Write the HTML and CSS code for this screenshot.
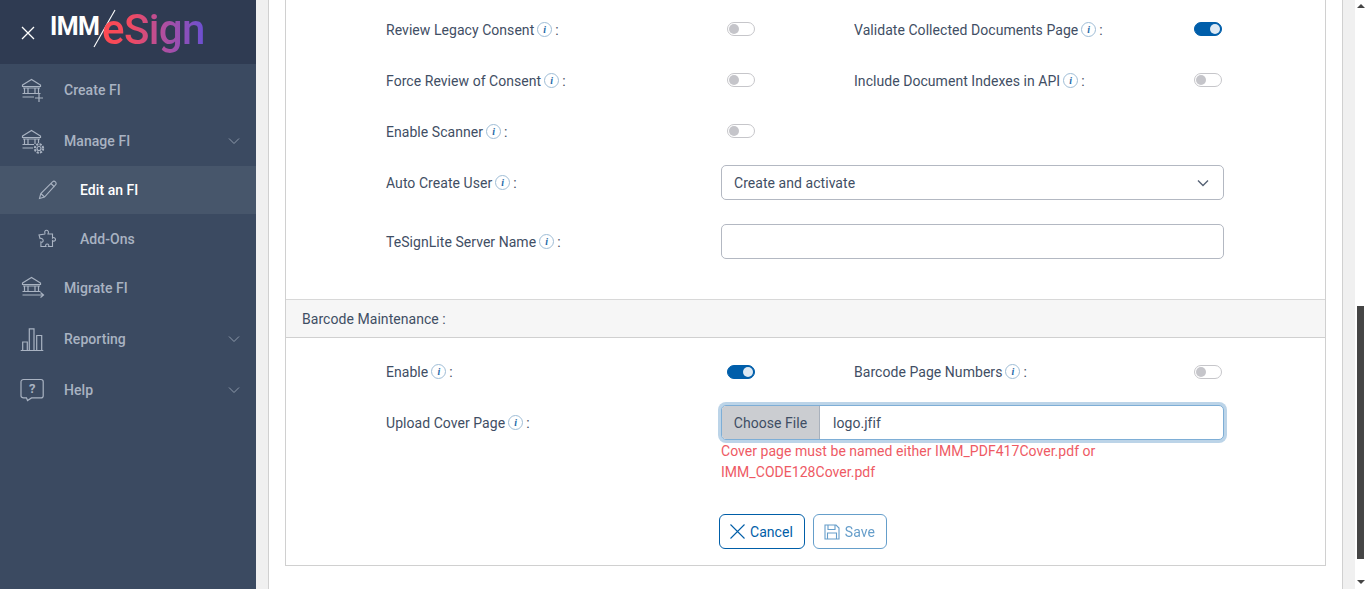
FILE: index.html
```html
<!DOCTYPE html>
<html lang="en">
<head>
<meta charset="utf-8">
<title>IMM eSign - Edit an FI</title>
<link rel="stylesheet" href="styles.css">
</head>
<body>
<div class="app">
  <aside class="sidebar">
    <div class="brand">
      <svg class="close-icon" width="16" height="16" viewBox="0 0 16 16"><path d="M2 2l12 12M14 2L2 14" stroke="#fff" stroke-width="1.3" fill="none"/></svg>
      <div class="logo">
        <span class="logo-imm">IMM</span>
        <svg class="logo-slash" width="24" height="40" viewBox="0 0 24 40"><path d="M22 1L1 38" stroke="#fff" stroke-width="1.1" fill="none"/></svg>
        <span class="logo-esign">eSign</span>
      </div>
    </div>
    <nav class="nav">
      <a class="nav-item">
        <svg class="nav-icon" width="26" height="28" viewBox="0 0 26 28"><g fill="none" stroke="#a9b3c2" stroke-width="1.2"><path d="M3.500 9L12.500 3.500 21.500 9v1.500H3.500zM5.500 12v5M9 12v5M16 12v5M19.500 12v5M4 12h17M3.500 17.500h18M3.500 21h11.500M20 18v8M16 22h8"/></g></svg>
        <span>Create FI</span>
      </a>
      <a class="nav-item">
        <svg class="nav-icon" width="26" height="28" viewBox="0 0 26 28"><g fill="none" stroke="#a9b3c2" stroke-width="1.2"><path d="M3.500 9L12.500 3.500 21.500 9v1.500H3.500zM5.500 12v5M9 12v5M16 12v5M19.500 12v4M4 12h17M3.500 17.500h11.500M3.500 21h10.500"/><circle cx="20" cy="21.500" r="2"/><circle cx="20" cy="21.500" r="4.200" stroke-dasharray="2.200 1.100" stroke-width="2"/></g></svg>
        <span>Manage FI</span>
        <svg class="chev" width="12" height="8" viewBox="0 0 12 8"><path d="M1 1.500l5 5 5-5" stroke="#8e9aab" fill="none"/></svg>
      </a>
      <a class="nav-item sub active">
        <svg class="nav-icon sub-icon" width="20" height="20" viewBox="0 0 20 20"><path d="M1.500 18.500l1.300-5L14.500 1.800c.9-.8 2.100-.7 2.900.1.800.8.900 2 .1 2.900L6.500 17zM2.800 13.500l3.700 3.500M13 3.500l3.500 3.500" fill="none" stroke="#a9b3c2" stroke-width="1.100"/></svg>
        <span>Edit an FI</span>
      </a>
      <a class="nav-item sub">
        <svg class="nav-icon sub-icon" width="20" height="20" viewBox="0 0 20 20"><path d="M7 4c-.8-1 0-2.800 1.500-2.800S11 3 10.200 4L10 5h4.500v4c1-.8 2.800-.5 3 1.200.2 1.800-2 2.300-3 1.500v5.800h-4c.7-1 .2-2.500-1.300-2.500s-2 1.500-1.300 2.500h-5v-4.500c1 .6 2.300 0 2.300-1.500S3.200 8.800 2 9.500L1 6l5.800-1z" fill="none" stroke="#a9b3c2" stroke-width="1.100"/></svg>
        <span>Add-Ons</span>
      </a>
      <a class="nav-item">
        <svg class="nav-icon" width="26" height="28" viewBox="0 0 26 28"><g fill="none" stroke="#a9b3c2" stroke-width="1.200"><path d="M3.500 9L12.500 3.500 21.500 9v1.500H3.500zM5.500 12v5M9 12v5M16 12v5M19.500 12v5M4 12h17M3.500 17.500h18M3.500 21h21M21.500 18.500l3 2.500-3 2.500"/></g></svg>
        <span>Migrate FI</span>
      </a>
      <a class="nav-item">
        <svg class="nav-icon" width="26" height="28" viewBox="0 0 26 28"><g fill="none" stroke="#a9b3c2" stroke-width="1.200"><path d="M1.700 25.500h22.600M3.700 25.500V17h4.600v8.500M10.300 25.500V3.800H15v21.700M17.700 25.500v-15h5v15"/></g></svg>
        <span>Reporting</span>
        <svg class="chev" width="12" height="8" viewBox="0 0 12 8"><path d="M1 1.500l5 5 5-5" stroke="#8e9aab" fill="none"/></svg>
      </a>
      <a class="nav-item">
        <svg class="nav-icon" width="26" height="28" viewBox="0 0 26 28"><path d="M4.500 3.500h17.500c1.300 0 2.200.9 2.200 2.200v14c0 1.300-.9 2.200-2.200 2.200h-9.500L8.500 24.500 7.500 21.900h-3c-1.300 0-2.500-.9-2.500-2.200v-14c0-1.300 1.200-2.200 2.500-2.200z" fill="none" stroke="#a9b3c2" stroke-width="1.200"/><text x="13.300" y="17" text-anchor="middle" class="help-mark">?</text></svg>
        <span>Help</span>
        <svg class="chev" width="12" height="8" viewBox="0 0 12 8"><path d="M1 1.500l5 5 5-5" stroke="#8e9aab" fill="none"/></svg>
      </a>
    </nav>
  </aside>

  <div class="gutter"></div>

  <main class="panel">
    <section class="card">
      <div class="rows upper">
        <div class="row">
          <div class="label">Review Legacy Consent<i class="info">i</i><span class="colon">:</span></div>
          <div class="cell"><span class="toggle"></span></div>
          <div class="label">Validate Collected Documents Page<i class="info">i</i><span class="colon">:</span></div>
          <div class="cell"><span class="toggle on"></span></div>
        </div>
        <div class="row">
          <div class="label">Force Review of Consent<i class="info">i</i><span class="colon">:</span></div>
          <div class="cell"><span class="toggle"></span></div>
          <div class="label">Include Document Indexes in API<i class="info">i</i><span class="colon">:</span></div>
          <div class="cell"><span class="toggle"></span></div>
        </div>
        <div class="row">
          <div class="label">Enable Scanner<i class="info">i</i><span class="colon">:</span></div>
          <div class="cell"><span class="toggle"></span></div>
        </div>
        <div class="row field-row">
          <div class="label">Auto Create User<i class="info">i</i><span class="colon">:</span></div>
          <div class="field select">
            <span>Create and activate</span>
            <svg width="12" height="8" viewBox="0 0 12 8"><path d="M1 1.500l5 5 5-5" stroke="#566275" stroke-width="1.400" fill="none"/></svg>
          </div>
        </div>
        <div class="row field-row name-row">
          <div class="label">TeSignLite Server Name<i class="info">i</i><span class="colon">:</span></div>
          <div class="field"></div>
        </div>
      </div>

      <header class="band">Barcode Maintenance :</header>

      <div class="rows lower">
        <div class="row">
          <div class="label">Enable<i class="info">i</i><span class="colon">:</span></div>
          <div class="cell"><span class="toggle on"></span></div>
          <div class="label">Barcode Page Numbers<i class="info">i</i><span class="colon">:</span></div>
          <div class="cell"><span class="toggle"></span></div>
        </div>
        <div class="row upload-row">
          <div class="label">Upload Cover Page<i class="info">i</i><span class="colon">:</span></div>
          <div class="upload-col">
            <div class="file">
              <span class="file-btn">Choose File</span>
              <span class="file-name">logo.jfif</span>
            </div>
            <p class="error">Cover page must be named either IMM_PDF417Cover.pdf or IMM_CODE128Cover.pdf</p>
          </div>
        </div>
        <div class="actions">
          <button class="btn" type="button">
            <svg width="17" height="17" viewBox="0 0 17 17"><path d="M1.500 1.500l14 14M15.500 1.500l-14 14" stroke="#005ea8" stroke-width="1.100" fill="none"/></svg>
            Cancel
          </button>
          <button class="btn disabled" type="button">
            <svg width="16" height="16" viewBox="0 0 16 16"><g fill="none" stroke="#005ea8" stroke-width="1.100"><path d="M1 1h11l3 3v11H1zM4 1v4.500h7V1M3.500 15V9h9v6"/></g></svg>
            Save
          </button>
        </div>
      </div>
    </section>
  </main>

  <div class="track">
    <div class="scrollbar">
      <span class="arrow up"></span>
      <span class="thumb"></span>
      <span class="arrow down"></span>
    </div>
  </div>
</div>
</body>
</html>
```

FILE: styles.css
```css
* { box-sizing: border-box; }
html, body { margin: 0; height: 100%; overflow: hidden; }
body { font-family: Roboto, "Liberation Sans", sans-serif; font-size: 14px; color: #3f4e64; background: #fff; }

.app { display: flex; height: 589px; }

.sidebar { width: 256px; flex: none; background: #3b4a61; }
.brand { height: 64px; background: #2f3b52; display: flex; align-items: center; padding-left: 20px; }
.close-icon { flex: none; margin-top: 1px; }
.logo { position: relative; width: 170px; height: 64px; margin-left: 15px; }
.logo-imm { position: absolute; left: -1px; top: 12px; font-size: 25px; line-height: 30px; font-weight: 700; color: #fff; letter-spacing: -0.6px; }
.logo-slash { position: absolute; left: 42px; top: 9px; }
.logo-esign {
  position: absolute; left: 51px; top: 5px; font-size: 42px; line-height: 50px; font-weight: 500; letter-spacing: -0.6px;
  background: linear-gradient(90deg, #ff4a50 0%, #f04a62 28%, #b04fa0 60%, #6a50d2 100%);
  -webkit-background-clip: text; background-clip: text; color: transparent;
}

.nav { display: flex; flex-direction: column; }
.nav-item { height: 51px; display: flex; align-items: center; padding-left: 19px; color: #a9b3c2; font-weight: 500; letter-spacing: 0.05px; }
.nav-item span { flex: 1; }
.nav-icon { flex: none; margin-right: 19px; }
.chev { flex: none; margin-right: 16px; }
.nav-item.sub { height: 48px; padding-left: 38px; }
.nav-item.sub + .sub { padding-top: 2px; }
.sub-icon { margin-right: 22px; }
.nav-item.active { background: #47566b; color: #fff; }
.help-mark { font: 700 13px Roboto, sans-serif; fill: #a9b3c2; }

.gutter { width: 12px; flex: none; background: #f0f0f0; }

.panel { width: 1075px; flex: none; background: #fff; border-left: 1px solid #d0d0d0; border-right: 1px solid #d0d0d0; padding: 0 16px; overflow: hidden; }
.card { border: 1px solid #d0d0d0; border-top: 0; height: 566px; }

.rows { padding: 4px 0 0 100px; }
.row { display: flex; align-items: center; height: 51px; }
.label { width: 335px; flex: none; display: flex; align-items: center; letter-spacing: 0.05px; }
.row > .label:nth-child(3) { width: 334px; }
.cell { width: 133px; flex: none; padding-left: 6px; display: flex; }
.row > .cell:last-child { width: auto; }
.upper .cell { margin-bottom: 2px; }

.info {
  width: 15px; height: 15px; margin-left: 3px; border: 1px solid #9fbdd6; border-radius: 50%;
  display: inline-flex; align-items: center; justify-content: center;
  font: italic 700 10px/1 "Liberation Serif", serif; color: #1f6aa8;
}
.colon { margin-left: 3px; }

.toggle { width: 28px; height: 14px; border: 1px solid #c6c6ca; border-radius: 7px; background: #fff; position: relative; display: block; }
.toggle::after { content: ""; position: absolute; left: 1px; top: 1px; width: 10px; height: 10px; border-radius: 50%; background: #c5c5ca; }
.toggle.on { background: #005eaa; border-color: #005eaa; }
.toggle.on::after { left: 15px; background: #dde9f4; }

.field-row { height: 35px; margin-top: 8px; }
.name-row { margin-top: 24px; }
.field { width: 503px; height: 35px; flex: none; border: 1px solid #b3b8c2; border-radius: 5px; background: #fff; padding: 0 14px 0 12px; display: flex; align-items: center; justify-content: space-between; }
.select { letter-spacing: 0.05px; }

.band { margin-top: 40px; height: 39px; background: #f6f6f6; border-top: 1px solid #d8d8d8; border-bottom: 1px solid #d0d0d0; padding-left: 16px; display: flex; align-items: center; letter-spacing: 0.05px; }

.lower { padding-top: 8px; }
.upload-row { height: auto; align-items: flex-start; margin-top: 8px; }
.upload-row > .label { height: 35px; }
.upload-col { width: 503px; flex: none; }
.file { height: 35px; border: 1px solid #7eaed6; border-radius: 5px; box-shadow: 0 0 0 3px #bcd4e8; display: flex; align-items: center; overflow: hidden; background: #fff; letter-spacing: 0.05px; }
.file-btn { width: 98px; height: 100%; background: #cbcdd1; border-right: 1px solid #a9b1bc; display: flex; align-items: center; justify-content: center; }
.file-name { padding-left: 13px; }
.error { margin: 0; color: #ee5a64; line-height: 21px; padding-top: 1px; letter-spacing: 0.04px; }

.actions { display: flex; gap: 8px; margin: 31px 0 0 333px; }
.btn { height: 35px; display: flex; align-items: center; gap: 4px; padding: 0 11px 0 9px; border: 1px solid #005ea8; border-radius: 6px; background: #fff; color: #005ea8; font: 14px Roboto, sans-serif; letter-spacing: 0.04px; }
.btn.disabled { opacity: 0.6; padding: 0 11px 0 10px; gap: 5px; }

.track { flex: 1; background: #f0f0f0; padding-left: 12px; }
.scrollbar { height: 100%; background: #fff; display: flex; flex-direction: column; align-items: center; position: relative; }
.thumb { width: 7px; height: 253px; margin-top: 298px; background: #454545; }
.arrow { width: 0; height: 0; border-left: 4px solid transparent; border-right: 4px solid transparent; }
.arrow.up { border-bottom: 4px solid #454545; margin-top: 4px; }
.arrow.down { border-top: 4px solid #454545; margin-top: 21px; }
```
